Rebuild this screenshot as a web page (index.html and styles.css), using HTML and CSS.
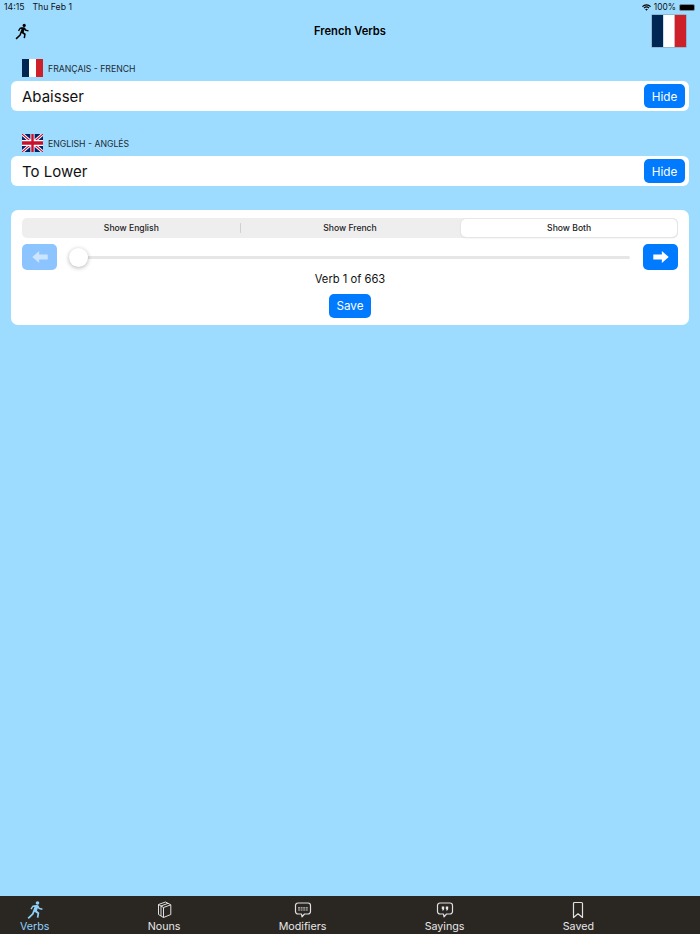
FILE: index.html
```html
<!DOCTYPE html>
<html lang="en">
<head>
<meta charset="utf-8">
<title>French Verbs</title>
<link rel="stylesheet" href="styles.css">
</head>
<body>
<div class="app">
  <div class="status">
    <div class="status-left"><span>14:15</span><span>Thu Feb 1</span></div>
    <div class="status-right">
      <svg class="wifi" viewBox="0 0 12 9"><path d="M6 8.800 4.200 6.900a2.600 2.600 0 0 1 3.600 0zM3.200 5.900 2.100 4.800a5.600 5.600 0 0 1 7.800 0L8.800 5.900a4 4 0 0 0-5.600 0zM1.100 3.800 0 2.700a8.600 8.600 0 0 1 12 0l-1.100 1.100a7 7 0 0 0-9.800 0z" fill="#000"/></svg>
      <span class="battery-text">100%</span>
      <span class="battery"></span>
    </div>
  </div>
  <header class="nav">
    <svg class="runner" viewBox="0 0 16 18"><use href="#run"/></svg>
    <h1>French Verbs</h1>
    <svg class="flag-lg" viewBox="0 0 3 3" preserveAspectRatio="none"><rect width="1" height="3" fill="#002654"/><rect x="1" width="1" height="3" fill="#fff"/><rect x="2" width="1" height="3" fill="#ce2028"/></svg>
  </header>

  <section class="lang">
    <div class="lang-label">
      <svg class="flag" viewBox="0 0 3 3" preserveAspectRatio="none"><rect width="1" height="3" fill="#002654"/><rect x="1" width="1" height="3" fill="#fff"/><rect x="2" width="1" height="3" fill="#ce2028"/></svg>
      <span class="lang-text">FRANÇAIS - FRENCH</span>
    </div>
    <div class="word-card"><span>Abaisser</span><button class="btn hide">Hide</button></div>
  </section>

  <section class="lang lang-en">
    <div class="lang-label">
      <svg class="flag" viewBox="0 0 60 36" preserveAspectRatio="none">
        <rect width="60" height="36" fill="#012169"/>
        <path d="M0 0 60 36M60 0 0 36" stroke="#fff" stroke-width="7"/>
        <path d="M0 0 60 36M60 0 0 36" stroke="#c8102e" stroke-width="2.500"/>
        <path d="M30 0V36M0 18H60" stroke="#fff" stroke-width="12"/>
        <path d="M30 0V36M0 18H60" stroke="#c8102e" stroke-width="7"/>
      </svg>
      <span class="lang-text">ENGLISH - ANGLÉS</span>
    </div>
    <div class="word-card"><span>To Lower</span><button class="btn hide">Hide</button></div>
  </section>

  <section class="panel">
    <div class="segments">
      <div class="seg">Show English</div>
      <div class="seg seg-divided">Show French</div>
      <div class="seg seg-on">Show Both</div>
    </div>
    <div class="stepper">
      <button class="btn arrow arrow-off"><svg viewBox="0 0 18 14"><path d="M0 7 8 0V4H18V10H8V14z" fill="#fff"/></svg></button>
      <div class="slider"><span class="thumb"></span></div>
      <button class="btn arrow"><svg viewBox="0 0 18 14"><path d="M18 7 10 0V4H0V10H10V14z" fill="#fff"/></svg></button>
    </div>
    <div class="count">Verb 1 of 663</div>
    <button class="btn save">Save</button>
  </section>

  <nav class="tabs">
    <div class="tab tab-on">
      <svg class="tab-icon tab-icon-run" viewBox="0 0 16 18"><use href="#run"/></svg>
      <span>Verbs</span>
    </div>
    <div class="tab">
      <svg class="tab-icon" viewBox="0 0 18 18" fill="none" stroke="#e0e0e0" stroke-width="1" stroke-linejoin="round"><path d="M8.500 6.500 15.800 3.800V13.500L8.500 16.500Z"/><path d="M8.500 6.500 6 5V15L8.500 16.500"/><path d="M6 5 13 2.300 15.800 3.800"/><path d="M6 5 3.500 3.500V13.500L6 15"/><path d="M3.500 3.500 10.500 1 13 2.300"/></svg>
      <span>Nouns</span>
    </div>
    <div class="tab">
      <svg class="tab-icon" viewBox="0 0 18 18" fill="none" stroke="#e0e0e0" stroke-width="1.200" stroke-linejoin="round"><path d="M4 2H14A2.500 2.500 0 0 1 16.500 4.500V10.500A2.500 2.500 0 0 1 14 13H10.500L8 15.800 7.500 13H4A2.500 2.500 0 0 1 1.500 10.500V4.500A2.500 2.500 0 0 1 4 2Z"/><path d="M4 6.800H14M4 9H14" stroke-width="1.200" stroke-dasharray="2 .6" stroke="#c4c4c4"/></svg>
      <span>Modifiers</span>
    </div>
    <div class="tab">
      <svg class="tab-icon" viewBox="0 0 18 18" fill="none" stroke="#e0e0e0" stroke-width="1.200" stroke-linejoin="round"><path d="M4 2H14A2.500 2.500 0 0 1 16.500 4.500V10.500A2.500 2.500 0 0 1 14 13H10.500L8 15.800 7.500 13H4A2.500 2.500 0 0 1 1.500 10.500V4.500A2.500 2.500 0 0 1 4 2Z"/><path d="M5.800 5.500H8.200V7.500C8.200 8.600 7.500 9.400 6.400 9.700V8H5.800ZM9.800 5.500H12.200V7.500C12.200 8.600 11.500 9.400 10.400 9.700V8H9.800Z" fill="#e8e8e8" stroke="none"/></svg>
      <span>Sayings</span>
    </div>
    <div class="tab">
      <svg class="tab-icon" viewBox="0 0 18 18" fill="none" stroke="#e0e0e0" stroke-width="1.200" stroke-linejoin="round"><path d="M5.500 1.500H12.500A1 1 0 0 1 13.500 2.500V16.500L9 12.800 4.500 16.500V2.500A1 1 0 0 1 5.500 1.500Z"/></svg>
      <span>Saved</span>
    </div>
  </nav>
</div>
<svg class="defs" width="0" height="0"><defs>
  <g id="run" fill="currentColor">
    <circle cx="10.500" cy="2" r="1.800"/>
    <path d="M7 4.200 10.200 4C10.900 4 11.400 4.300 11.700 4.900L12.500 6.700 15.600 7.500 15.200 9 11.500 8 10.900 6.800 9.900 9.800 12.300 11.700 11.500 16.800 9.800 16.500 10.400 12.700 7.600 10.800 6.500 13.500 1.800 18 .6 16.700 5 12.600 7.500 6 6.200 6 4.700 8.600 3.400 7.800 5.400 4.800C5.700 4.400 6.300 4.200 7 4.200Z"/>
  </g>
</defs></svg>
</body>
</html>
```
FILE: styles.css
```css
* { box-sizing: border-box; }
html, body { margin: 0; padding: 0; height: 100%; }
body { font-family: Inter, "Liberation Sans", sans-serif; color: #000; background: #9edcff; }
.app { width: 700px; height: 934px; display: flex; flex-direction: column; overflow: hidden; }
.defs { display: block; }

.status { height: 14px; padding: 0 5px 0 4px; display: flex; justify-content: space-between; align-items: center; font-size: 8.700px; color: #111; }
.status-left { display: flex; gap: 8px; }
.status-right { display: flex; align-items: center; gap: 3px; }
.battery-text { font-size: 8.400px; }
.wifi { width: 9px; height: 7px; }
.battery { width: 16px; height: 7px; border: 1px solid #6f8a99; border-radius: 2px; display: block; background: #000; }

.nav { height: 36px; padding: 0 14px 2px 15px; display: flex; align-items: center; justify-content: space-between; position: relative; }
.nav h1 { margin: 0; font-size: 11.200px; font-weight: 600; position: absolute; left: 0; right: 0; top: 10px; text-align: center; line-height: 15px; }
.runner { width: 14px; height: 17px; color: #000; margin-top: 1px; }
.flag-lg { width: 34px; height: 32px; box-shadow: 0 0 0 .5px #7a99ab; }

.lang { padding: 0 11px; margin-top: 9px; }
.lang-en { margin-top: 23px; }
.lang-label { height: 18px; padding-left: 11px; display: flex; align-items: center; gap: 5px; font-size: 8.700px; color: #1c2a33; margin-bottom: 4px; }
.lang-text { padding-top: 2px; }
.flag { width: 21px; height: 18px; }
.word-card { height: 30px; background: #fff; border-radius: 6px; padding: 0 4px 0 11px; display: flex; align-items: center; justify-content: space-between; font-size: 15px; color: #111; }

.btn { border: 0; background: #007aff; color: #fff; font: inherit; border-radius: 5px; padding: 0; display: flex; align-items: center; justify-content: center; }
.hide { width: 41px; height: 24px; font-size: 11.700px; padding-top: 1px; }

.panel { margin: 24px 11px 0; height: 115px; background: #fff; border-radius: 7px; padding: 8px 11px 0; display: flex; flex-direction: column; align-items: center; }
.segments { width: 100%; height: 20px; background: #eeeeee; border-radius: 5px; display: grid; grid-template-columns: repeat(3, 1fr); font-size: 8.600px; font-weight: 500; color: #222; flex: none; }
.seg { display: flex; align-items: center; justify-content: center; position: relative; }
.seg-divided::before { content: ""; position: absolute; left: -1px; top: 5px; bottom: 5px; width: 1px; background: #d0d0d0; }
.seg-on { background: #fff; border-radius: 5px; box-shadow: 0 0 0 1px #e6e6e6, 0 1px 2px rgba(0,0,0,.12); margin: 1px 1px 1px 2px; }

.stepper { width: 100%; margin-top: 6px; display: flex; align-items: center; gap: 12px; flex: none; }
.arrow { width: 35px; height: 26px; flex: none; }
.arrow svg { width: 16px; height: 12px; }
.arrow-off { background: #8cc4ff; }
.arrow-off svg { opacity: .55; }
.slider { flex: 1; height: 3px; background: #e6e6e6; border-radius: 2px; position: relative; margin-right: 1px; }
.thumb { position: absolute; left: 0; top: -8px; width: 19px; height: 19px; border-radius: 50%; background: #fff; box-shadow: 0 1px 4px rgba(0,0,0,.3); }

.count { font-size: 11.200px; line-height: 16px; margin-top: 1px; color: #111; }
.save { width: 42px; height: 24px; font-size: 11.700px; margin-top: 7px; flex: none; }

.tabs { margin-top: auto; height: 38px; background: #2a2723; padding: 0 106px 0 20px; display: flex; justify-content: space-between; }
.tab { display: flex; flex-direction: column; align-items: center; color: #e8e8e8; font-size: 10.700px; line-height: 14px; padding-top: 5px; gap: 1px; }
.tab-icon { width: 18px; height: 18px; flex: none; color: #e8e8e8; }
.tab-icon-run { width: 16px; }
.tab-on, .tab-on .tab-icon { color: #8fd0f8; }
```
